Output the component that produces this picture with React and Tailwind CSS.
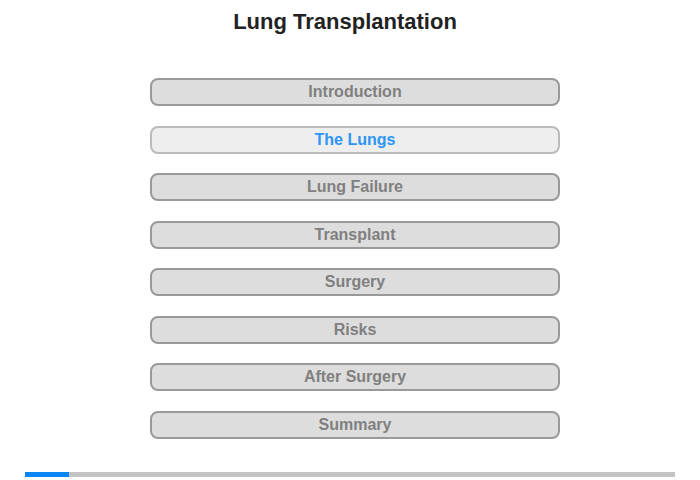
import React from "react";

const items = ["Introduction", "The Lungs", "Lung Failure", "Transplant", "Surgery", "Risks", "After Surgery", "Summary"];

export default function App() {
  return (
    <div className="w-[700px] h-[480px] bg-white flex flex-col" style={{ fontFamily: '"Liberation Sans", Arial, sans-serif' }}>
      <h1 className="pt-[10px] pr-[10px] h-[78px] text-center text-[22px] leading-[24px] font-bold text-[#222]">Lung Transplantation</h1>
      <div className="flex flex-col items-center gap-[19.5px]">
        {items.map((t, i) => {
          const active = i === 1;
          return (
            <div
              key={t}
              className={
                "w-[410px] h-[28px] ml-[10px] rounded-[8px] border-2 flex items-center justify-center text-[16px] font-bold " +
                (active ? "bg-[#eeeeee] border-[#bbbbbb] text-[#2d95f5]" : "bg-[#dddddd] border-[#999999] text-[#808080]")
              }
            >
              {t}
            </div>
          );
        })}
      </div>
      <div className="mt-[33px] mx-[25px] h-[5px] bg-[#c4c4c4] flex">
        <div className="w-[44px] h-full bg-[#0a86f5]" />
      </div>
    </div>
  );
}
